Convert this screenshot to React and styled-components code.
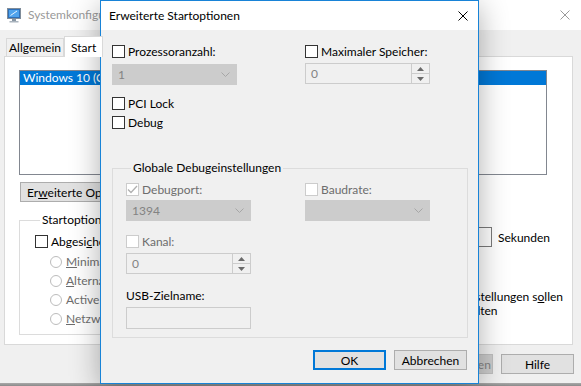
import React from 'react';
import styled, {createGlobalStyle} from 'styled-components';

const FONT = `Lato, "Noto Sans", "DejaVu Sans", sans-serif`;

const GlobalStyle = createGlobalStyle`
  html, body {
    margin: 0;
    padding: 0;
    overflow: hidden;
  }
  body {
    font-family: ${FONT};
    font-size: 12px;
    color: #000;
    background: #f0f0f0;
  }
  * {
    box-sizing: border-box;
  }
`;

const Desktop = styled.div`
  position: relative;
  width: 581px;
  height: 386px;
  overflow: hidden;
  display: flex;
  flex-direction: column;
`;

const BackWindow = styled.div`
  height: 383px;
  display: flex;
  flex-direction: column;
  background: #f0f0f0;
`;

const WindowEdge = styled.div`
  height: 3px;
  background: linear-gradient(#a9a9a9, #8a8a8a);
`;

const TitleBar = styled.div`
  height: ${p => p.$height}px;
  flex-shrink: 0;
  display: flex;
  align-items: center;
  background: #fff;
  padding: 0 ${p => p.$right}px 0 ${p => p.$left}px;
`;

const TitleText = styled.span`
  flex: 1;
  margin-left: ${p => p.$gap}px;
  color: ${p => (p.$active ? '#000' : '#999')};
  line-height: 16px;
  white-space: nowrap;
`;

const WindowBody = styled.div`
  flex: 1;
  display: flex;
  flex-direction: column;
  padding: 6px 8px 0 4px;
`;

const TabRow = styled.div`
  display: flex;
  align-items: flex-end;
  height: 20px;
  padding-left: 2px;
`;

const Tab = styled.div`
  position: relative;
  z-index: ${p => (p.$selected ? 1 : 0)};
  height: ${p => (p.$selected ? 21 : 18)}px;
  margin-bottom: ${p => (p.$selected ? -1 : 0)}px;
  padding: ${p => (p.$selected ? '2px 6px 0' : '0 2px')};
  border: 1px solid #d9d9d9;
  border-bottom: none;
  background: ${p => (p.$selected ? '#fff' : '#f0f0f0')};
  line-height: 17px;
  white-space: nowrap;
`;

const Panel = styled.div`
  height: 289px;
  background: #fff;
  border: 1px solid #d9d9d9;
  padding: 13px 25px 0 14px;
  display: flex;
  flex-direction: column;
  overflow: hidden;
`;

const ListBox = styled.div`
  height: 105px;
  border: 1px solid #828790;
  overflow: hidden;
`;

const ListItem = styled.div`
  height: 14px;
  line-height: 14px;
  padding-left: 3px;
  white-space: nowrap;
  overflow: hidden;
  background: ${p => (p.$selected ? '#0078d7' : 'transparent')};
  color: ${p => (p.$selected ? '#fff' : '#000')};
`;

const ButtonRow = styled.div`
  display: flex;
  gap: ${p => p.$gap}px;
  justify-content: ${p => (p.$end ? 'flex-end' : 'flex-start')};
  margin-top: ${p => p.$top}px;
  padding-left: ${p => p.$left || 0}px;
  margin-right: ${p => p.$right || 0}px;
`;

const WinButton = styled.div`
  width: ${p => p.$width}px;
  height: 20px;
  flex-shrink: 0;
  display: flex;
  align-items: center;
  justify-content: ${p => (p.$align === 'left' ? 'flex-start' : 'center')};
  padding-left: ${p => (p.$align === 'left' ? 6 : 0)}px;
  white-space: nowrap;
  overflow: hidden;
  background: ${p => (p.$disabled ? '#cccccc' : '#e1e1e1')};
  border: ${p =>
    p.$primary ? '2px solid #0078d7' : `1px solid ${p.$disabled ? '#bfbfbf' : '#adadad'}`};
  color: ${p => (p.$disabled ? '#838383' : '#000')};
`;

const LowerRow = styled.div`
  display: flex;
  margin-top: 10px;
`;

const GroupBox = styled.fieldset`
  flex-shrink: 0;
  margin: ${p => p.$top || 0}px 0 0;
  padding: ${p => p.$pad};
  width: ${p => p.$width}px;
  height: ${p => (p.$height ? `${p.$height}px` : 'auto')};
  min-width: 0;
  border: 1px solid #dcdcdc;
`;

const Legend = styled.legend`
  padding: 0 2px;
  margin-left: 5px;
  line-height: 16px;
`;

const CheckRow = styled.div`
  display: flex;
  align-items: center;
  gap: 3px;
  height: 15px;
  margin-top: ${p => p.$top || 0}px;
  color: ${p => (p.$disabled ? '#6d6d6d' : '#000')};
  white-space: nowrap;
`;

const BoxFrame = styled.span`
  width: 13px;
  height: 13px;
  flex-shrink: 0;
  display: flex;
  align-items: center;
  justify-content: center;
  background: #fff;
  border: 1px solid ${p => (p.$disabled ? '#cccccc' : '#333333')};
`;

const RadioList = styled.div`
  display: flex;
  flex-direction: column;
  gap: 4px;
  margin-top: 5px;
  padding-left: 15px;
`;

const RadioRow = styled.div`
  display: flex;
  align-items: center;
  gap: 4px;
  height: 15px;
  color: #6d6d6d;
  white-space: nowrap;
`;

const RadioDot = styled.span`
  width: 12px;
  height: 12px;
  flex-shrink: 0;
  border-radius: 50%;
  border: 1px solid #bcbcbc;
  background: #fff;
`;

const RightCol = styled.div`
  min-width: 0;
  margin-left: 15px;
  padding-top: 15px;
  display: flex;
  flex-direction: column;
`;

const TimeoutRow = styled.div`
  display: flex;
  align-items: center;
  height: 20px;
  padding-left: 48px;
  white-space: nowrap;
`;

const TextField = styled.div`
  width: ${p => p.$width}px;
  height: ${p => p.$height || 21}px;
  margin-top: ${p => p.$top || 0}px;
  flex-shrink: 0;
  border: 1px solid ${p => (p.$disabled ? '#cccccc' : '#7a7a7a')};
  background: ${p => (p.$disabled ? '#f0f0f0' : '#fff')};
`;

const Unit = styled.span`
  margin-left: 6px;
`;

const PermRow = styled.div`
  display: flex;
  align-items: flex-start;
  gap: 4px;
  margin-top: 43px;
  line-height: 14px;
  white-space: nowrap;
`;

const Dialog = styled.div`
  position: absolute;
  left: 100px;
  top: 0;
  width: 379px;
  height: 384px;
  display: flex;
  flex-direction: column;
  background: #f0f0f0;
  border: 1px solid #1883d7;
  box-shadow: 0 6px 28px rgba(0, 0, 0, 0.32);
`;

const DialogBody = styled.div`
  flex: 1;
  padding: 14px 11px 0 11px;
`;

const OptionGrid = styled.div`
  display: grid;
  grid-template-columns: ${p => p.$first}px 1fr;
`;

const Column = styled.div`
  display: flex;
  flex-direction: column;
`;

const Combo = styled.div`
  width: 125px;
  height: 21px;
  margin-top: ${p => p.$top || 0}px;
  display: flex;
  align-items: center;
  justify-content: space-between;
  padding: 0 6px 0 5px;
  background: #cccccc;
  border: 1px solid #cccccc;
  color: #838383;
`;

const Spin = styled.div`
  width: 125px;
  height: 21px;
  margin-top: ${p => p.$top || 0}px;
  display: flex;
  border: 1px solid #cccccc;
  background: #f0f0f0;
  color: #838383;
`;

const SpinText = styled.span`
  flex: 1;
  padding-left: 5px;
  line-height: 19px;
`;

const SpinButtons = styled.div`
  width: 18px;
  display: flex;
  flex-direction: column;
  border-left: 1px solid #cccccc;
`;

const SpinHalf = styled.div`
  flex: 1;
  display: flex;
  align-items: center;
  justify-content: center;
  border-bottom: ${p => (p.$first ? '1px solid #cccccc' : 'none')};
`;

const FieldLabel = styled.div`
  margin-top: ${p => p.$top || 0}px;
  line-height: 15px;
  white-space: nowrap;
`;

const CloseIcon = ({color}) => (
  <svg width="10" height="10" viewBox="0 0 10 10">
    <path d="M0.5 0.5 L9.5 9.5 M9.5 0.5 L0.5 9.5" stroke={color} strokeWidth="1" />
  </svg>
);

const AppIcon = () => (
  <svg width="15" height="15" viewBox="0 0 15 15">
    <rect x="0.5" y="0.5" width="13" height="10" fill="#2e6fb8" stroke="#7f8c99" />
    <rect x="2" y="2" width="10" height="7" fill="#4fa3ec" />
    <path d="M3.5 7.5 L10 3" stroke="#e8f4ff" strokeWidth="1" />
    <rect x="5" y="11" width="4" height="2" fill="#8896a3" />
    <rect x="2.5" y="13" width="9" height="1.5" fill="#aab4be" />
  </svg>
);

const Chevron = () => (
  <svg width="9" height="5" viewBox="0 0 9 5">
    <path d="M0.5 0.5 L4.5 4.5 L8.5 0.5" fill="none" stroke="#a6a6a6" strokeWidth="1" />
  </svg>
);

const Arrow = ({up}) => (
  <svg width="7" height="4" viewBox="0 0 7 4">
    <path d={up ? 'M0 4 L3.5 0 L7 4 Z' : 'M0 0 L3.5 4 L7 0 Z'} fill="#6a6a6a" />
  </svg>
);

const CheckBox = ({label, checked, disabled, top}) => (
  <CheckRow $disabled={disabled} $top={top}>
    <BoxFrame $disabled={disabled}>
      {checked && (
        <svg width="11" height="9" viewBox="0 0 11 9">
          <path d="M1 4.5 L4 7.5 L10 1" fill="none" stroke="#b0b0b0" strokeWidth="1.3" />
        </svg>
      )}
    </BoxFrame>
    <span>{label}</span>
  </CheckRow>
);

const SpinBox = ({value, top}) => (
  <Spin $top={top}>
    <SpinText>{value}</SpinText>
    <SpinButtons>
      <SpinHalf $first>
        <Arrow up />
      </SpinHalf>
      <SpinHalf>
        <Arrow />
      </SpinHalf>
    </SpinButtons>
  </Spin>
);

const radios = [
  {key: 'min', text: <><u>M</u>inimal</>},
  {key: 'alt', text: <><u>A</u>lternative Shell</>},
  {key: 'ad', text: <>Active Directory</>},
  {key: 'net', text: <><u>N</u>etzwerk</>},
];

const App = () => {
  return (
    <Desktop>
      <GlobalStyle />
      <BackWindow>
        <TitleBar $height={30} $left={7} $right={11}>
          <AppIcon />
          <TitleText $gap={6}>Systemkonfiguration</TitleText>
          <CloseIcon color="#9a9a9a" />
        </TitleBar>
        <WindowBody>
          <TabRow>
            <Tab>Allgemein</Tab>
            <Tab $selected>Start</Tab>
          </TabRow>
          <Panel>
            <ListBox>
              <ListItem $selected>Windows 10 (C:\Windows) : Aktuelles Betriebssystem</ListItem>
            </ListBox>
            <ButtonRow $gap={6} $top={7} $left={1}>
              <WinButton $width={124} $align="left">
                Er<u>w</u>eiterte Optionen...
              </WinButton>
            </ButtonRow>
            <LowerRow>
              <GroupBox $width={360} $height={123} $pad="6px 0 0 15px">
                <Legend>Startoptionen</Legend>
                <CheckBox label={<>Abgesi<u>c</u>herter Start</>} />
                <RadioList>
                  {radios.map(r => (
                    <RadioRow key={r.key}>
                      <RadioDot />
                      <span>{r.text}</span>
                    </RadioRow>
                  ))}
                </RadioList>
              </GroupBox>
              <RightCol>
                <TimeoutRow>
                  <TextField $width={50} $height={20} />
                  <Unit>Sekunden</Unit>
                </TimeoutRow>
                <PermRow>
                  <BoxFrame />
                  <span>
                    Alle Starteinstellungen s<u>o</u>llen
                    <br />
                    dauerhaft gelten
                  </span>
                </PermRow>
              </RightCol>
            </LowerRow>
          </Panel>
          <ButtonRow $gap={8} $top={9} $end $right={-1}>
            <WinButton $width={73} $disabled>
              Übernehmen
            </WinButton>
            <WinButton $width={73}>Hilfe</WinButton>
          </ButtonRow>
        </WindowBody>
      </BackWindow>
      <WindowEdge />

      <Dialog>
        <TitleBar $height={29} $left={8} $right={10}>
          <TitleText $active $gap={0}>
            Erweiterte Startoptionen
          </TitleText>
          <CloseIcon color="#000" />
        </TitleBar>
        <DialogBody>
          <OptionGrid $first={193}>
            <Column>
              <CheckBox label="Prozessoranzahl:" />
              <Combo $top={5}>
                <span>1</span>
                <Chevron />
              </Combo>
              <CheckBox label="PCI Lock" top={11} />
              <CheckBox label="Debug" top={4} />
            </Column>
            <Column>
              <CheckBox label="Maximaler Speicher:" />
              <SpinBox value="0" top={4} />
            </Column>
          </OptionGrid>
          <GroupBox $width={356} $top={30} $pad="6px 0 8px 13px">
            <Legend>Globale Debugeinstellungen</Legend>
            <OptionGrid $first={179}>
              <Column>
                <CheckBox label="Debugport:" checked disabled />
                <Combo $top={3}>
                  <span>1394</span>
                  <Chevron />
                </Combo>
                <CheckBox label="Kanal:" disabled top={13} />
                <SpinBox value="0" top={4} />
                <FieldLabel $top={14}>USB-Zielname:</FieldLabel>
                <TextField $width={125} $height={22} $top={4} $disabled />
              </Column>
              <Column>
                <CheckBox label="Baudrate:" disabled />
                <Combo $top={3}>
                  <span />
                  <Chevron />
                </Combo>
              </Column>
            </OptionGrid>
          </GroupBox>
          <ButtonRow $gap={8} $top={12} $end>
            <WinButton $width={73} $primary>
              OK
            </WinButton>
            <WinButton $width={73}>Abbrechen</WinButton>
          </ButtonRow>
        </DialogBody>
      </Dialog>
    </Desktop>
  );
};

export default App;
